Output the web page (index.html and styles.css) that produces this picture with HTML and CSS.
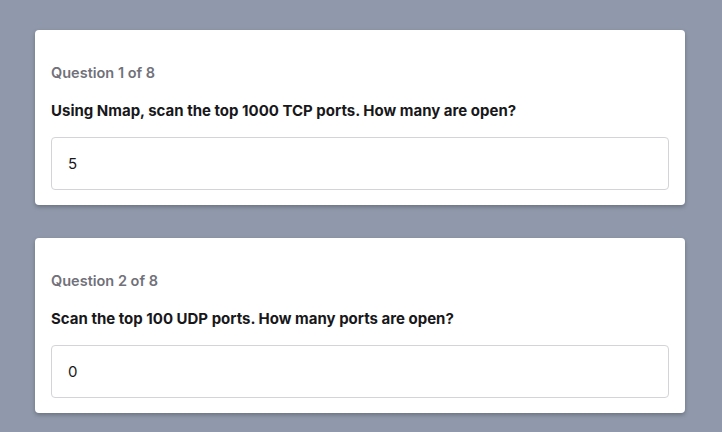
FILE: index.html
```html
<!DOCTYPE html>
<html>
<head>
<meta charset="utf-8">
<link rel="stylesheet" href="styles.css">
</head>
<body>
<main class="list">
  <section class="card">
    <div class="label">Question 1 of 8</div>
    <div class="question">Using Nmap, scan the top 1000 TCP ports. How many are open?</div>
    <input class="answer" type="text" value="5">
  </section>
  <section class="card">
    <div class="label">Question 2 of 8</div>
    <div class="question">Scan the top 100 UDP ports. How many ports are open?</div>
    <input class="answer" type="text" value="0">
  </section>
</main>
</body>
</html>
```
FILE: styles.css
```css
html, body {
  margin: 0;
  height: 100%;
}
body {
  background: #8f99ab;
  font-family: Inter, "Noto Sans", sans-serif;
  overflow: hidden;
}
.list {
  display: flex;
  flex-direction: column;
  gap: 33px;
  padding: 30px 0 0 35px;
  width: 650px;
}
.card {
  background: #fff;
  border-radius: 4px;
  box-shadow: 0 2px 4px rgba(0, 0, 0, 0.25);
  padding: 33px 16px 15px;
  display: flex;
  flex-direction: column;
}
.label {
  font-size: 14.5px;
  line-height: 20px;
  font-weight: 600;
  color: #71717a;
}
.question {
  margin-top: 18px;
  font-size: 15px;
  line-height: 20px;
  font-weight: 700;
  color: #18181b;
}
.answer {
  margin-top: 16px;
  box-sizing: border-box;
  width: 100%;
  height: 53px;
  border: 1px solid #d4d4d8;
  border-radius: 4px;
  padding: 0 16px;
  font-family: Inter, "Noto Sans", sans-serif;
  font-size: 15px;
  color: #18181b;
  outline: none;
}
```
